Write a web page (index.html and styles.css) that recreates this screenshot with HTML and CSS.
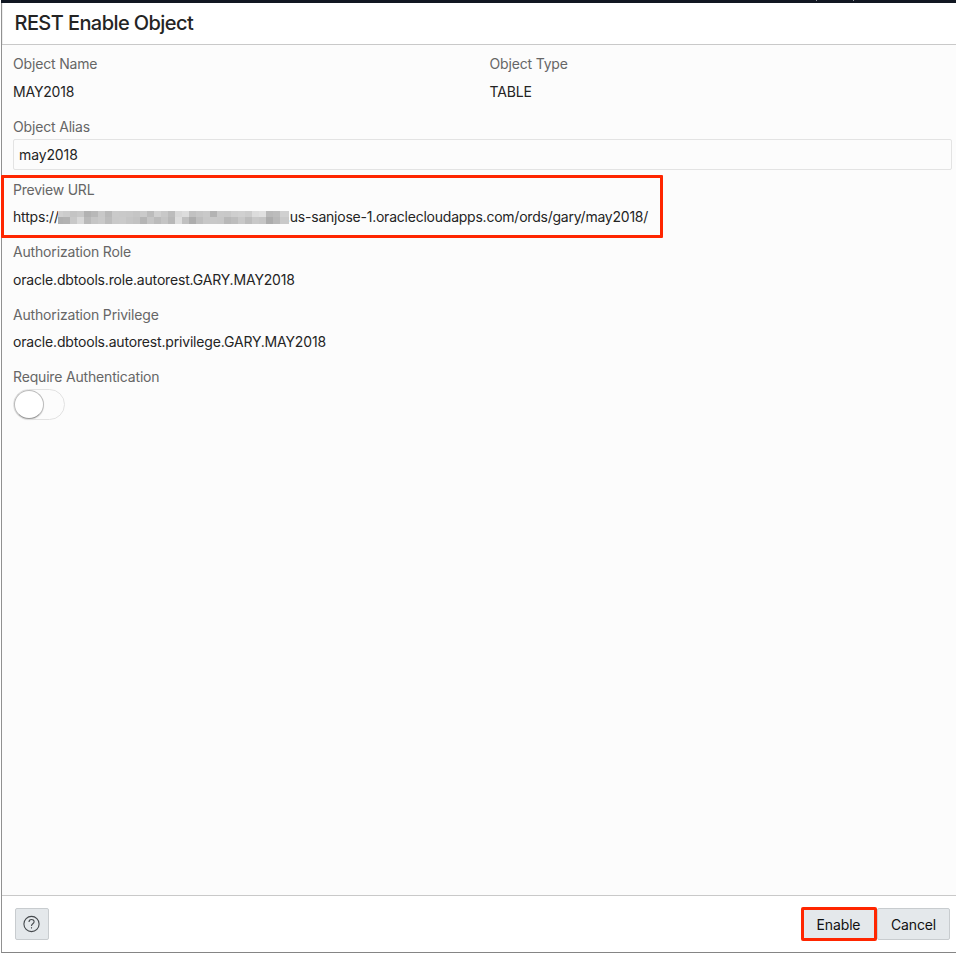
FILE: index.html
```html
<!DOCTYPE html>
<html lang="en">
<head>
<meta charset="utf-8">
<title>REST Enable Object</title>
<link rel="stylesheet" href="styles.css">
</head>
<body>
<div class="topbar"><i></i><i></i></div>
<section class="dialog">
  <header class="head"><h1>REST Enable Object</h1></header>
  <main class="content">
    <div class="pair">
      <div class="field"><div class="label l-name">Object Name</div><div class="value v-name">MAY2018</div></div>
      <div class="field"><div class="label l-type">Object Type</div><div class="value v-type">TABLE</div></div>
    </div>
    <div class="field"><label class="label l-alias" for="alias">Object Alias</label><input id="alias" class="input" value="may2018"></div>
    <div class="field preview">
      <div class="label l-url">Preview URL</div>
      <div class="value url"><span class="scheme">https://</span><svg class="mask" width="231" height="13" viewBox="0 0 231 13" shape-rendering="crispEdges"></svg><span class="host">.us-sanjose-1.oraclecloudapps.com/ords/gary/may2018/</span></div>
    </div>
    <div class="field"><div class="label l-role">Authorization Role</div><div class="value v-role">oracle.dbtools.role.autorest.GARY.MAY2018</div></div>
    <div class="field"><div class="label l-priv">Authorization Privilege</div><div class="value v-priv">oracle.dbtools.autorest.privilege.GARY.MAY2018</div></div>
    <div class="field"><div class="label l-auth">Require Authentication</div><div class="switch"><span class="thumb"></span></div></div>
  </main>
  <footer class="foot">
    <button class="btn help" aria-label="Help"><svg width="18" height="18" viewBox="0 0 18 18" fill="none" stroke="#45494d" stroke-width="1.1"><circle cx="8.5" cy="9" r="7.6"/><path d="M6 7.1c0-3.5 5.1-3.4 5.1-.3 0 2-2.6 2-2.6 4.1"/><path d="M8.5 12.2v1.3"/></svg></button>
    <button class="btn enable"><span>Enable</span></button>
    <button class="btn cancel"><span>Cancel</span></button>
  </footer>
</section>
<script src="mask.js"></script>
</body>
</html>
```
FILE: mask.js
```js
const rows = [
  'd0 cc c4 c8 b2 b8 c8 b9 ca c9 c8 c5 ca bc d0 c8 bc d8 dd c1 c6 c9 b3 c9 c8 ce d0 cc dc e0 b9 bc d0',
  'b0 b2 c8 d8 b9 c5 c9 bc c9 ca c5 c2 b5 c5 bb c4 b8 dd c0 ad be c7 c8 c7 b8 bd c8 bc c8 c5 ac b8 c9'
];
const svg = document.querySelector('.mask');
rows.forEach((row, r) => row.split(' ').forEach((v, c) => {
  const cell = document.createElementNS('http://www.w3.org/2000/svg', 'rect');
  const x = Math.max(0, c * 7 - 2);
  cell.setAttribute('x', x);
  cell.setAttribute('y', r * 6);
  cell.setAttribute('width', c === 32 ? 231 - x : c === 0 ? 5 : 7);
  cell.setAttribute('height', r ? 7 : 6);
  cell.setAttribute('fill', '#' + v + v + v);
  svg.appendChild(cell);
}));
```
FILE: styles.css
```css
*, *::after { box-sizing: border-box; }
body { margin: 0; height: 953px; overflow: hidden; background: #fff; color: #242424; font: 14px/20px Inter, sans-serif; display: flex; flex-direction: column; }
.topbar { height: 3px; margin-left: 1px; background: #111722; display: flex; gap: 36px; padding-left: 815px; flex: none; }
.topbar i { width: 1px; height: 1px; background: #8b8f96; }
.dialog { flex: 1; margin-left: 1px; border-left: 1px solid #919191; border-bottom: 1px solid #858585; display: flex; flex-direction: column; box-shadow: inset 1px 0 #eee; }
.head { height: 42px; border-bottom: 1px solid #c9c9c9; padding: 5px 0 0 12.5px; }
h1 { margin: 0; font-size: 20px; line-height: 30px; font-weight: 500; letter-spacing: -.58px; white-space: nowrap; }
.content { flex: 1; background: #fcfcfc; padding: 9px 4px 0 11px; }
.pair { display: grid; grid-template-columns: 476.5px 1fr; }
.field { height: 62.5px; }
.pair .field { height: 63px; }
.label { display: block; width: max-content; color: #666; white-space: nowrap; letter-spacing: -.17px; }
.value { width: max-content; padding-top: 8px; height: 28px; white-space: nowrap; letter-spacing: -.175px; }
.l-url { letter-spacing: -.22px; }
.v-priv { padding-top: 7px; }
.input { display: block; width: 939px; height: 31px; margin: 2px 0 0; padding: 0 5px; border: 1px solid #e3e3e3; border-radius: 2px; background: #fcfcfc; color: #242424; font: inherit; letter-spacing: -.12px; outline: 0; }
.preview { position: relative; }
.preview::after { content: ""; position: absolute; left: -12px; top: -4.5px; width: 662px; height: 63px; border: 3px solid #ff2600; border-radius: 1px; }
.url { display: flex; padding-top: 7px; }
.mask { position: relative; z-index: 1; margin-top: 4px; flex: none; }
.scheme { width: 45px; }
.host { margin-left: -3px; letter-spacing: -.23px; }
.switch { width: 52px; height: 31px; margin-top: 2px; border: 1px solid #e2e2e2; border-radius: 16px; }
.thumb { display: block; width: 30px; height: 29px; border: 1px solid #bcbcbc; border-bottom-color: #999; border-radius: 50%; background: #fff; box-shadow: 0 1px 1px #ddd; }
.foot { height: 57px; border-top: 1px solid #c9c9c9; background: #fff; display: flex; align-items: flex-start; padding: 12px 6px 0 13px; }
.btn { height: 32px; padding: 0; border: 1px solid #c8cccf; border-radius: 2px; background: #e4e8eb; color: #111; font: inherit; letter-spacing: -.15px; line-height: 30px; display: flex; align-items: center; justify-content: center; }
.btn span { padding-top: 2px; line-height: 20px; }
.help { width: 34px; margin-right: auto; }
.enable { width: 76px; height: 34px; margin-top: -1px; padding-right: 1px; border: 3px solid #ff2600; }
.cancel { width: 73px; }
```
